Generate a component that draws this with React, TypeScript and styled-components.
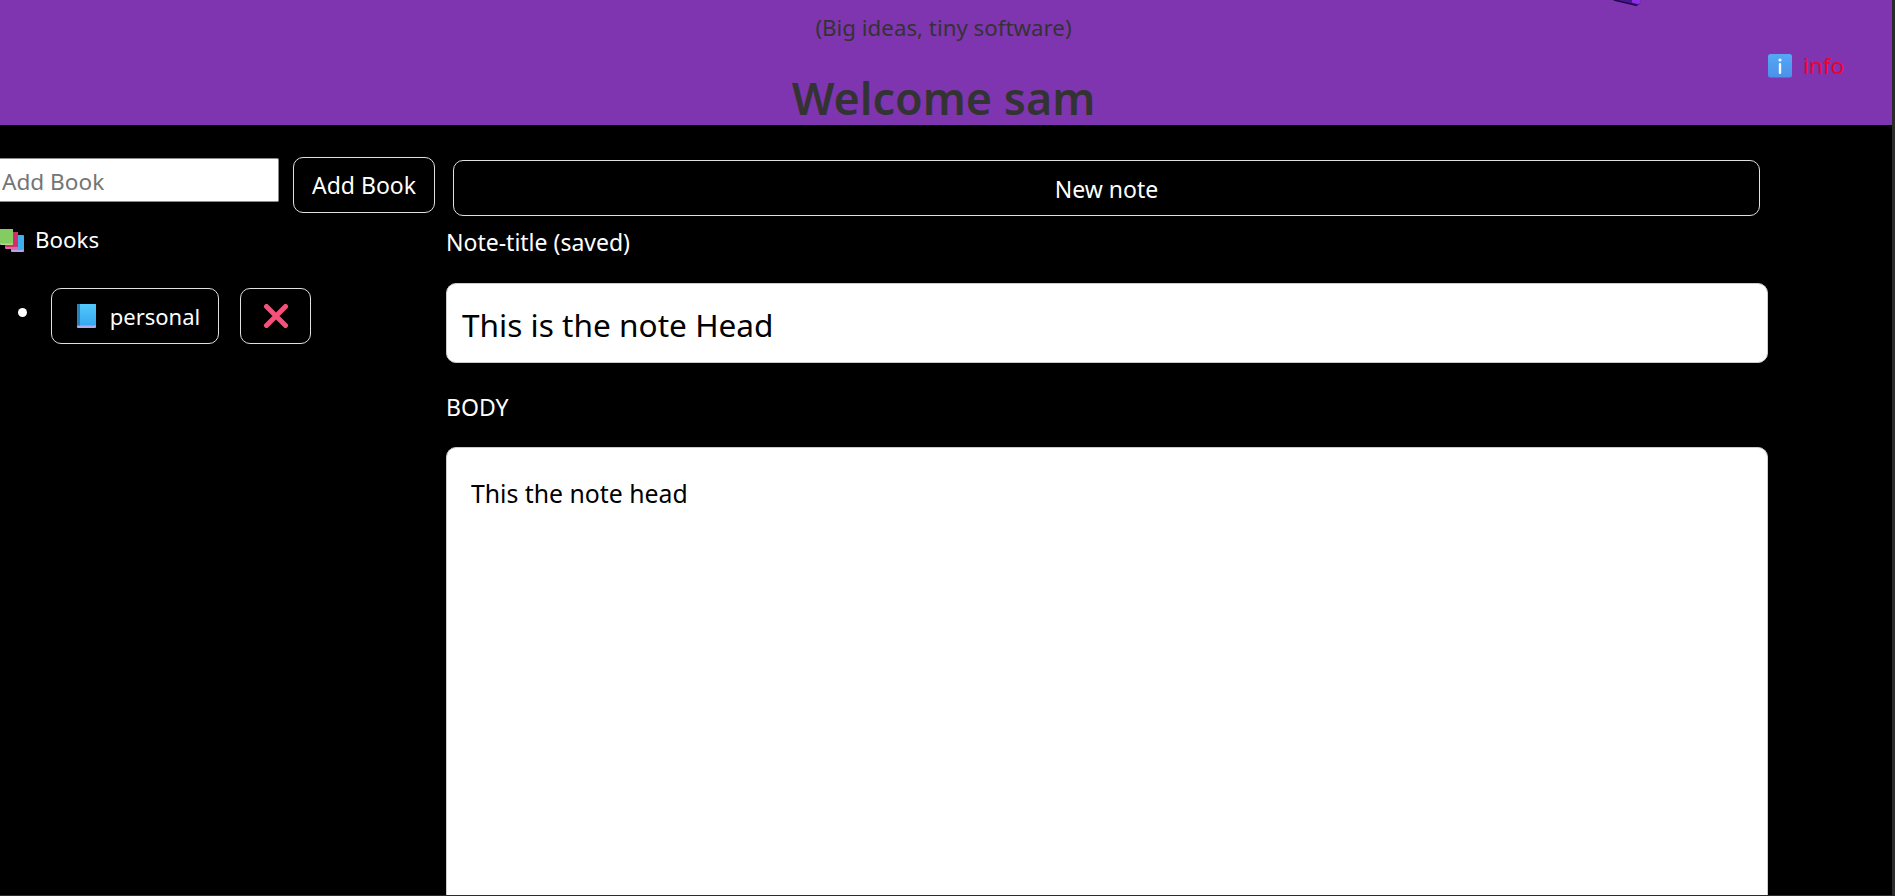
import React from "react";
import styled, { createGlobalStyle } from "styled-components";

const Global = createGlobalStyle`
  html, body { margin: 0; padding: 0; height: 100%; background: #000; overflow: hidden; }
  body { font-family: "Noto Sans", "Open Sans", sans-serif; }
  * { box-sizing: border-box; }
  input::placeholder { color: #757575; opacity: 1; }
`;

const Frame = styled.div`
  width: 1895px;
  height: 896px;
  overflow: hidden;
  background: #000;
  border-right: 3px solid #2b2b2b;
  border-bottom: 1px solid #2b2b2b;
  display: flex;
  flex-direction: column;
`;

const Header = styled.header`
  flex: none;
  height: 125px;
  background: #8035b0;
  color: #333;
  position: relative;
  display: flex;
  flex-direction: column;
  align-items: center;
  padding-right: 5px;
`;

const Tagline = styled.div`
  font-size: 22.3px;
  line-height: 30px;
  margin-top: 13px;
`;

const Welcome = styled.h1`
  margin: 27px 0 0;
  font-size: 44.9px;
  line-height: 55px;
  font-weight: 600;
  color: #333;
`;

const Logo = styled.svg`
  position: absolute;
  left: 1600px;
  top: 0;
`;

const InfoLink = styled.a`
  position: absolute;
  left: 1768px;
  top: 50px;
  display: flex;
  align-items: center;
  gap: 11px;
  color: #f0002a;
  font-size: 22.6px;
  line-height: 32px;
`;

const Body = styled.div`
  flex: 1;
  min-height: 0;
  display: flex;
`;

const Sidebar = styled.aside`
  flex: none;
  width: 446px;
  color: #fff;
  padding-top: 32px;
`;

const AddRow = styled.div`
  display: flex;
  align-items: flex-start;
  gap: 14px;
`;

const BookInput = styled.input`
  width: 279px;
  height: 44px;
  margin-top: 1px;
  padding: 2px 2px 0;
  border: 1px solid #8a8a8a;
  border-left: 0;
  border-radius: 0 2px 2px 0;
  background: #fff;
  font: inherit;
  font-size: 22.6px;
`;

const OutlineButton = styled.button`
  height: 56px;
  border: 1px solid #e0e0e0;
  border-radius: 10px;
  background: #000;
  color: #fff;
  font: inherit;
  font-size: 23px;
  display: flex;
  align-items: center;
  justify-content: center;
  padding: 0;
`;

const AddButton = styled(OutlineButton)`
  width: 142px;
`;

const BooksHeading = styled.div`
  margin-top: 12px;
  display: flex;
  align-items: center;
  gap: 11px;
  font-size: 22.3px;
  line-height: 30px;
`;

const BookList = styled.ul`
  list-style: none;
  margin: 33px 0 0;
  padding: 0 0 0 18px;
`;

const BookItem = styled.li`
  display: flex;
  align-items: flex-start;
  gap: 21px;
`;

const Bullet = styled.span`
  width: 9px;
  height: 9px;
  border-radius: 50%;
  background: #fff;
  margin-top: 20px;
  margin-right: 3px;
`;

const BookButton = styled(OutlineButton)`
  width: 168px;
  gap: 13px;
  padding-left: 7px;
  font-size: 22px;
`;

const DeleteButton = styled(OutlineButton)`
  width: 71px;
`;

const Main = styled.main`
  flex: none;
  width: 1322px;
  color: #fff;
  padding-top: 35px;
`;

const NewNote = styled(OutlineButton)`
  width: 1307px;
  margin-left: 7px;
  padding-top: 1px;
`;

const Label = styled.div`
  font-size: 23px;
  line-height: 30px;
`;

const TitleLabel = styled(Label)`
  margin-top: 11px;
`;

const TitleInput = styled.input`
  display: block;
  width: 100%;
  height: 80px;
  margin-top: 26px;
  padding: 2px 15px 0;
  border: 1px solid #ccc;
  border-radius: 10px;
  background: #fff;
  color: #000;
  font: inherit;
  font-size: 31.6px;
`;

const BodyLabel = styled(Label)`
  margin-top: 29px;
`;

const BodyArea = styled.textarea`
  display: block;
  width: 100%;
  height: 600px;
  margin-top: 25px;
  padding: 28px 24px;
  border: 1px solid #ccc;
  border-radius: 10px;
  background: #fff;
  color: #000;
  font: inherit;
  font-size: 24.8px;
  line-height: 34px;
  resize: none;
`;

const InfoIcon = () => (
  <svg width="24" height="24" viewBox="0 0 24 24">
    <defs>
      <linearGradient id="infoFill" x1="0" y1="0" x2="0" y2="1">
        <stop offset="0" stopColor="#55a8f5" />
        <stop offset="1" stopColor="#4a90ea" />
      </linearGradient>
    </defs>
    <rect width="24" height="23.5" rx="2.5" fill="url(#infoFill)" />
    <circle cx="12" cy="6" r="1.6" fill="#f2f6ff" />
    <rect x="10.8" y="9" width="2.4" height="11" rx="1" fill="#f2f6ff" />
  </svg>
);

const BooksIcon = () => (
  <svg width="24" height="23" viewBox="0 0 24 23">
    <rect x="11" y="7" width="13" height="16" rx="1" fill="#b9a3e8" />
    <rect x="11" y="6" width="13" height="15" rx="1" fill="#3fb0ee" />
    <rect x="5" y="3" width="13" height="17" rx="1" fill="#d96aa8" />
    <rect x="5" y="3" width="13" height="15" rx="1" fill="#cf2f6c" />
    <rect x="0" y="0" width="13" height="16" rx="1" fill="#b6d98a" />
    <rect x="0" y="0" width="13" height="14.5" rx="1" fill="#84cc62" />
  </svg>
);

const BookIcon = () => (
  <svg width="20" height="24" viewBox="0 0 20 24">
    <defs>
      <linearGradient id="bookFill" x1="0" y1="0" x2="0" y2="1">
        <stop offset="0" stopColor="#52c8fb" />
        <stop offset="1" stopColor="#35a8f0" />
      </linearGradient>
    </defs>
    <rect x="0" y="0" width="19" height="24" rx="1" fill="#b3a8ea" />
    <rect x="0" y="0" width="19" height="21.5" rx="1" fill="url(#bookFill)" />
    <rect x="0" y="0" width="3" height="21.5" fill="#2a7fb8" />
  </svg>
);

const CrossIcon = () => (
  <svg width="24" height="24" viewBox="0 0 24 24">
    <path d="M2.5 2.5 L21.5 21.5 M21.5 2.5 L2.5 21.5" stroke="#f5507a" strokeWidth="5" strokeLinecap="round" />
  </svg>
);

export default function App() {
  return (
    <>
      <Global />
      <Frame>
        <Header>
          <Tagline>(Big ideas, tiny software)</Tagline>
          <Welcome>Welcome sam</Welcome>
          <Logo width="42" height="7" viewBox="0 0 42 7">
            <path d="M12 0 L32 0 L40.5 0 L40 4 L37.5 5.5 Z" fill="#4a1590" />
            <path d="M32 0 L40.5 0 L40 3.5 L37.5 4 L32 2.6 Z" fill="#8f2fe6" />
            <path d="M14 0 L37 5.5" stroke="#1e0a4a" strokeWidth="1.4" fill="none" />
          </Logo>
          <InfoLink>
            <InfoIcon />
            info
          </InfoLink>
        </Header>
        <Body>
          <Sidebar>
            <AddRow>
              <BookInput placeholder="Add Book" />
              <AddButton>Add Book</AddButton>
            </AddRow>
            <BooksHeading>
              <BooksIcon />
              Books
            </BooksHeading>
            <BookList>
              <BookItem>
                <Bullet />
                <BookButton>
                  <BookIcon />
                  personal
                </BookButton>
                <DeleteButton>
                  <CrossIcon />
                </DeleteButton>
              </BookItem>
            </BookList>
          </Sidebar>
          <Main>
            <NewNote>New note</NewNote>
            <TitleLabel>Note-title (saved)</TitleLabel>
            <TitleInput defaultValue="This is the note Head" />
            <BodyLabel>BODY</BodyLabel>
            <BodyArea defaultValue="This the note head" />
          </Main>
        </Body>
      </Frame>
    </>
  );
}
